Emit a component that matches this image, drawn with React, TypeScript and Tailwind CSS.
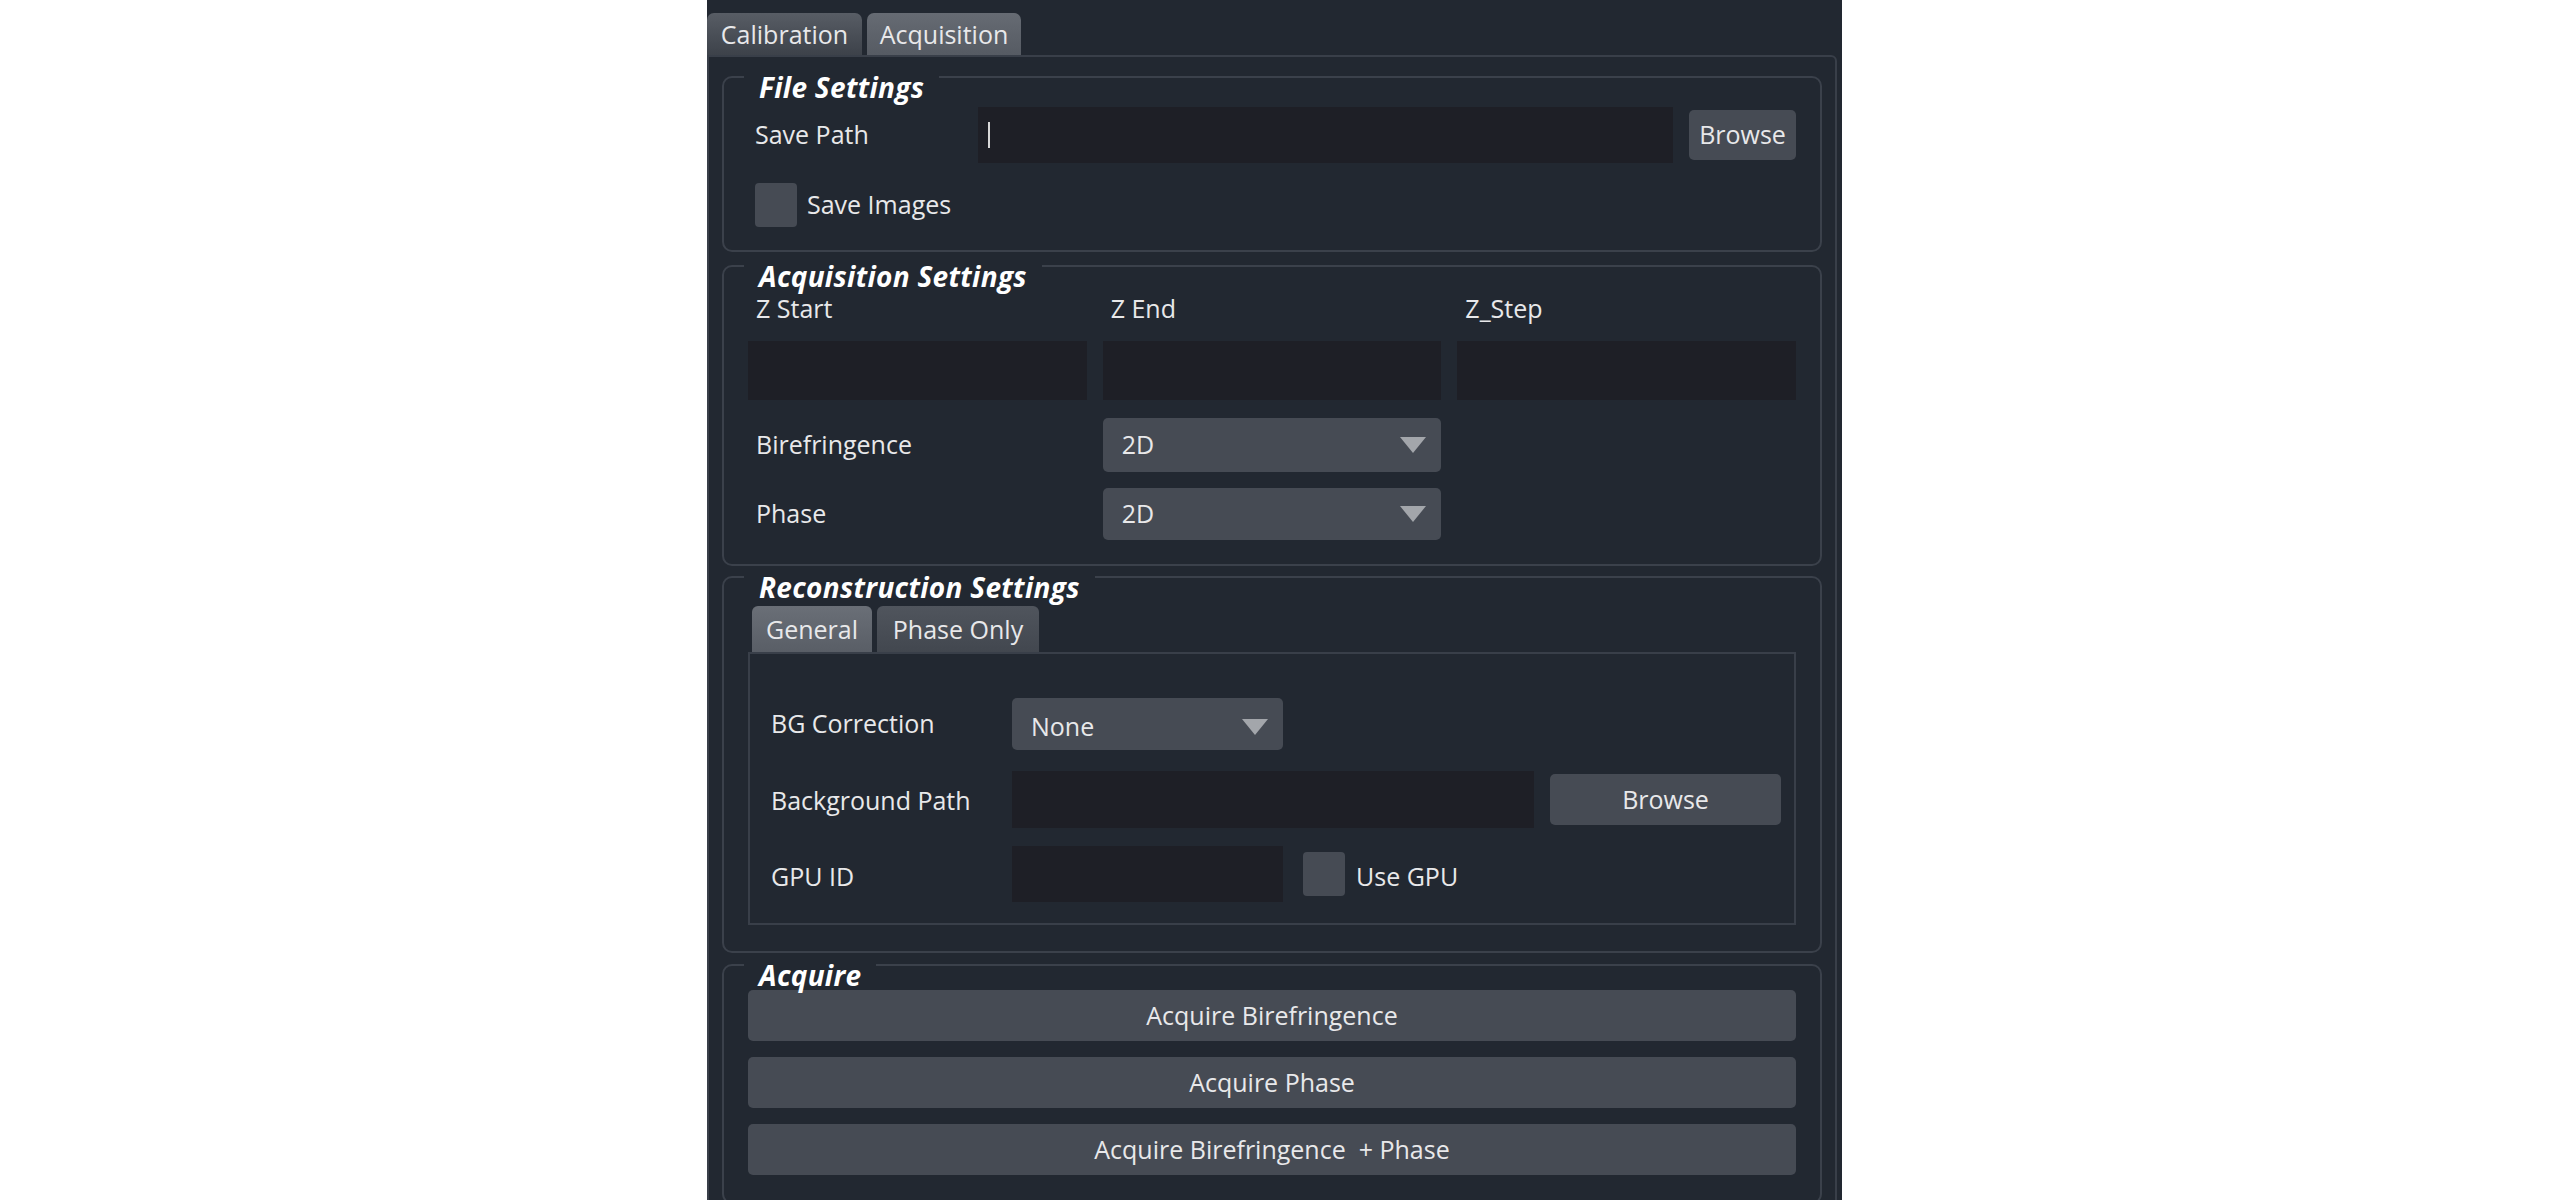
import React from "react";

function GroupBox({ title, className, children }: { title: string; className?: string; children: React.ReactNode }) {
  return (
    <div className={`relative mx-[13px] rounded-[10px] border-2 border-[#3b414b] ${className ?? ""}`}>
      <div className="absolute left-[20px] top-[-6px] bg-[#222831] px-[15px] text-[28px] font-bold italic leading-[30px] tracking-[0.3px] text-white">
        {title}
      </div>
      {children}
    </div>
  );
}

function Arrow() {
  return (
    <svg width="26" height="16" viewBox="0 0 26 16" className="shrink-0">
      <polygon points="0,0 26,0 13,16" fill="#a3a6ab" />
    </svg>
  );
}

function Combo({ value, className }: { value: string; className?: string }) {
  return (
    <div className={`flex items-center justify-between rounded-[5px] bg-[#464b54] pl-[19px] pr-[15px] ${className ?? ""}`}>
      <span>{value}</span>
      <Arrow />
    </div>
  );
}

function Checkbox() {
  return <div className="h-[44px] w-[42px] shrink-0 rounded-[4px] bg-[#464b54]" />;
}

export default function App() {
  return (
    <div className="min-h-[1200px] w-full bg-white font-['Open_Sans','Noto_Sans',sans-serif] text-[25px] text-[#e8e8ea]">
      <div className="ml-[707px] h-[1200px] w-[1135px] overflow-hidden bg-[#222831] pt-[13px]">
        {/* top tabs */}
        <div className="flex gap-[5px] leading-none">
          <div className="flex h-[42px] w-[155px] items-center justify-center rounded-t-[7px] bg-gradient-to-b from-[#585d65] to-[#3d424a]">
            Calibration
          </div>
          <div className="flex h-[42px] w-[154px] items-center justify-center rounded-t-[7px] bg-gradient-to-b from-[#666b73] to-[#565b63]">
            Acquisition
          </div>
        </div>

        <div className="mr-[5px] h-[1200px] rounded-tr-[6px] border-2 border-[#393f49] pt-[19px]">
          {/* File Settings */}
          <GroupBox title="File Settings" className="h-[176px] pl-[31px] pr-[24px] pt-[29px]">
            <div className="flex h-[56px] items-center">
              <span className="w-[223px]">Save Path</span>
              <div className="flex h-[56px] flex-1 items-center bg-[#1e1f26] pl-[10px]">
                <div className="h-[26px] w-[2px] bg-[#d8d8d8]" />
              </div>
              <button className="ml-[16px] h-[50px] w-[107px] rounded-[5px] bg-[#464b54] text-[#e8e8ea]">Browse</button>
            </div>
            <div className="mt-[19px] flex h-[46px] items-center gap-[10px]">
              <Checkbox />
              <span>Save Images</span>
            </div>
          </GroupBox>

          {/* Acquisition Settings */}
          <GroupBox title="Acquisition Settings" className="mt-[13px] h-[301px] px-[24px] pt-[27px]">
            <div className="grid grid-cols-3 gap-x-[16px]">
              <div className="flex h-[30px] items-center pl-[8px]">Z Start</div>
              <div className="flex h-[30px] items-center pl-[8px]">Z End</div>
              <div className="flex h-[30px] items-center pl-[8px]">Z_Step</div>
              <div className="mt-[17px] h-[59px] bg-[#1e1f26]" />
              <div className="mt-[17px] h-[59px] bg-[#1e1f26]" />
              <div className="mt-[17px] h-[59px] bg-[#1e1f26]" />
              <div className="mt-[18px] flex h-[54px] items-center pl-[8px]">Birefringence</div>
              <Combo value="2D" className="mt-[18px] h-[54px]" />
              <div />
              <div className="mt-[16px] flex h-[52px] items-center pl-[8px]">Phase</div>
              <Combo value="2D" className="mt-[16px] h-[52px]" />
              <div />
            </div>
          </GroupBox>

          {/* Reconstruction Settings */}
          <GroupBox title="Reconstruction Settings" className="mt-[10px] h-[377px] px-[24px] pt-[28px]">
            <div className="flex gap-[5px] pl-[4px] leading-none">
              <div className="flex h-[46px] w-[120px] items-center justify-center rounded-t-[6px] bg-gradient-to-b from-[#6a6f77] to-[#595e66]">
                General
              </div>
              <div className="flex h-[46px] w-[162px] items-center justify-center rounded-t-[6px] bg-gradient-to-b from-[#50555d] to-[#42474f]">
                Phase Only
              </div>
            </div>
            <div className="h-[273px] border-2 border-[#393f49] pl-[21px] pr-[13px] pt-[44px]">
              <div className="flex h-[52px] items-center">
                <span className="w-[241px]">BG Correction</span>
                <Combo value="None" className="h-[52px] w-[271px] pl-[17px] pt-[6px]" />
              </div>
              <div className="mt-[21px] flex h-[57px] items-center">
                <span className="w-[241px] pt-[2px]">Background Path</span>
                <div className="h-[57px] w-[522px] bg-[#1e1f26]" />
                <button className="ml-[16px] h-[51px] flex-1 rounded-[5px] bg-[#464b54] text-[#e8e8ea]">Browse</button>
              </div>
              <div className="mt-[18px] flex h-[56px] items-center">
                <span className="w-[241px] pt-[6px]">GPU ID</span>
                <div className="h-[56px] w-[271px] bg-[#1e1f26]" />
                <div className="ml-[20px] flex items-center gap-[11px]">
                  <Checkbox />
                  <span className="pt-[6px]">Use GPU</span>
                </div>
              </div>
            </div>
          </GroupBox>

          {/* Acquire */}
          <GroupBox title="Acquire" className="mt-[11px] h-[240px] px-[24px] pt-[24px]">
            <div className="flex flex-col gap-[16px]">
              <button className="h-[51px] rounded-[5px] bg-[#464b54] text-[#e8e8ea]">Acquire Birefringence</button>
              <button className="h-[51px] rounded-[5px] bg-[#464b54] text-[#e8e8ea]">Acquire Phase</button>
              <button className="h-[51px] rounded-[5px] bg-[#464b54] text-[#e8e8ea]">Acquire Birefringence&nbsp; + Phase</button>
            </div>
          </GroupBox>
        </div>
      </div>
    </div>
  );
}
